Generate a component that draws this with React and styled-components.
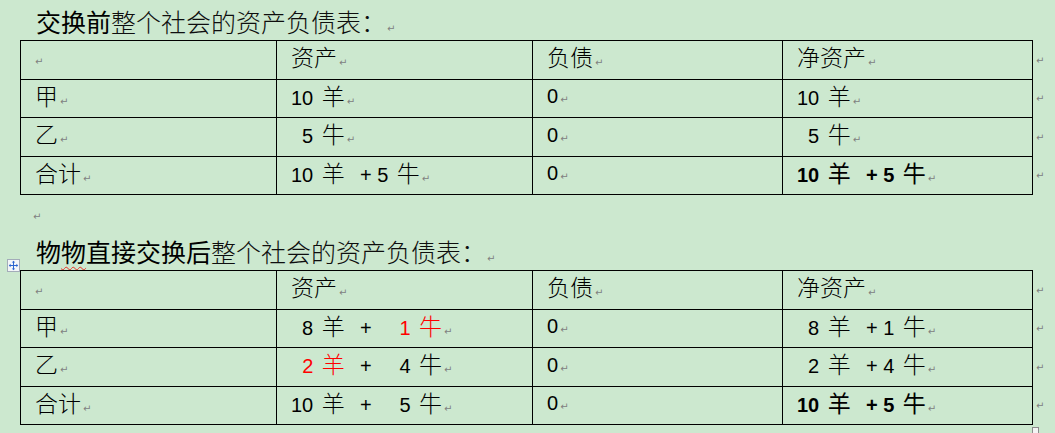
import styled, { createGlobalStyle } from "styled-components";

const LATIN = `"Liberation Sans", "Noto Sans CJK SC", sans-serif`;
const CJK = `"Noto Sans CJK SC", "Noto Sans CJK JP", sans-serif`;
const RED = "#ff0000";

const GlobalStyle = createGlobalStyle`
  html, body {
    margin: 0;
    padding: 0;
    background: #cce8cf;
  }
`;

const Page = styled.div`
  width: 1055px;
  height: 433px;
  overflow: hidden;
  box-sizing: border-box;
  padding-top: 2px;
  background: #cce8cf;
  color: #000;
`;

const Heading = styled.h2`
  margin: 0;
  height: 38px;
  padding-left: 36px;
  line-height: 38px;
  font-family: ${CJK};
  font-size: 25px;
  font-weight: 300;
  color: #0e0e0e;
  white-space: nowrap;
`;

const Strong = styled.span`
  font-weight: 400;
  color: #000;
`;

const Misspelt = styled.span`
  text-decoration: underline wavy #e8322a;
  text-decoration-thickness: 1px;
  text-underline-offset: 4px;
`;

const Mark = styled.span`
  margin-left: ${({ $gap }) => $gap ?? 2}px;
  font-family: "DejaVu Sans", sans-serif;
  font-size: 10px;
  font-weight: 400;
  color: #808080;
`;

const EmptyPara = styled.div`
  height: 37px;
  box-sizing: border-box;
  padding: 0 0 9px 33px;
  display: flex;
  align-items: flex-end;
  line-height: 12px;
`;

const TableWrap = styled.div`
  position: relative;
  margin-left: 20px;
  width: 1035px;
`;

const Table = styled.table`
  border-collapse: collapse;
  table-layout: fixed;
`;

const Row = styled.tr`
  height: 38.5px;
`;

const Cell = styled.td`
  padding: 0 0 0 14px;
  border: 1px solid #000;
  vertical-align: middle;
  font-family: ${LATIN};
  font-size: 20px;
  font-weight: ${({ $bold }) => ($bold ? 700 : 400)};
  white-space: pre;
  line-height: 26px;
`;

const EndCell = styled.td`
  padding: 0 0 0 1px;
  border: none;
  vertical-align: middle;
  line-height: 26px;
`;

const Label = styled.span`
  font-family: ${CJK};
  font-size: 23px;
  font-weight: 300;
  color: #000;
`;

const Amount = styled.span`
  white-space: pre;
`;

const Unit = styled.span`
  margin: 0 4px 0 3px;
  font-family: ${CJK};
  font-size: 23px;
  font-weight: ${({ $bold }) => ($bold ? 400 : 300)};
  color: ${({ $red }) => ($red ? RED : "#000")};

  &:last-child {
    margin-right: 0;
  }
`;

const Num = styled.span`
  color: ${({ $red }) => ($red ? RED : "inherit")};
`;

const MoveHandle = styled.div`
  position: absolute;
  left: -13px;
  top: -12px;
  width: 13px;
  height: 13px;
`;

const ResizeHandle = styled.div`
  position: absolute;
  left: 1012px;
  top: calc(100% + 2px);
  width: 5px;
  height: 5px;
  border: 1px solid #8c8c8c;
  background: #f4f4f4;
`;

const u = (c, red) => ({ u: c, red });
const r = (t) => ({ t, red: true });

const table1 = [
  { label: "甲", assets: ["10 ", u("羊")], net: ["10 ", u("羊")] },
  { label: "乙", assets: ["  5 ", u("牛")], net: ["  5 ", u("牛")] },
  {
    label: "合计",
    assets: ["10 ", u("羊"), "  + 5 ", u("牛")],
    net: ["10 ", u("羊"), "  + 5 ", u("牛")],
    bold: true,
  },
];

const table2 = [
  {
    label: "甲",
    assets: ["  8 ", u("羊"), "  +     ", r("1 "), u("牛", true)],
    net: ["  8 ", u("羊"), "  + 1 ", u("牛")],
  },
  {
    label: "乙",
    assets: ["  ", r("2 "), u("羊", true), "  +     4 ", u("牛")],
    net: ["  2 ", u("羊"), "  + 4 ", u("牛")],
  },
  {
    label: "合计",
    assets: ["10 ", u("羊"), "  +     5 ", u("牛")],
    net: ["10 ", u("羊"), "  + 5 ", u("牛")],
    bold: true,
  },
];

function Qty({ parts, bold }) {
  return (
    <Amount>
      {parts.map((p, i) => {
        if (typeof p === "string") return <span key={i}>{p}</span>;
        if (p.u) return <Unit key={i} $red={p.red} $bold={bold}>{p.u}</Unit>;
        return <Num key={i} $red={p.red}>{p.t}</Num>;
      })}
    </Amount>
  );
}

function Ret() {
  return <Mark>↵</Mark>;
}

function BalanceTable({ rows }) {
  return (
    <Table>
      <colgroup>
        <col style={{ width: 256 }} />
        <col style={{ width: 256 }} />
        <col style={{ width: 250 }} />
        <col style={{ width: 250 }} />
        <col style={{ width: 20 }} />
      </colgroup>
      <tbody>
        <Row>
          <Cell><Mark $gap={0}>↵</Mark></Cell>
          <Cell><Label>资产</Label><Ret /></Cell>
          <Cell><Label>负债</Label><Ret /></Cell>
          <Cell><Label>净资产</Label><Ret /></Cell>
          <EndCell><Ret /></EndCell>
        </Row>
        {rows.map((row) => (
          <Row key={row.label}>
            <Cell><Label>{row.label}</Label><Ret /></Cell>
            <Cell><Qty parts={row.assets} /><Ret /></Cell>
            <Cell>0<Ret /></Cell>
            <Cell $bold={row.bold}><Qty parts={row.net} bold={row.bold} /><Ret /></Cell>
            <EndCell><Ret /></EndCell>
          </Row>
        ))}
      </tbody>
    </Table>
  );
}

export default function App() {
  return (
    <Page>
      <GlobalStyle />
      <Heading>
        <Strong>交换前</Strong>整个社会的资产负债表：<Mark $gap={1}>↵</Mark>
      </Heading>
      <TableWrap>
        <BalanceTable rows={table1} />
      </TableWrap>
      <EmptyPara>
        <Mark $gap={0}>↵</Mark>
      </EmptyPara>
      <Heading>
        <Strong>
          物<Misspelt>物</Misspelt>直接交换后
        </Strong>
        整个社会的资产负债表：<Mark $gap={1}>↵</Mark>
      </Heading>
      <TableWrap>
        <MoveHandle>
          <svg width="13" height="13" viewBox="0 0 13 13">
            <rect x="0.5" y="0.5" width="12" height="12" fill="#f3f5f8" stroke="#a3acb9" />
            <path d="M6.5 3v7M3 6.5h7" stroke="#2b64cf" strokeWidth="1" />
            <path d="M6.5 1.8L4.8 3.6h3.4zM6.5 11.2L4.8 9.4h3.4zM1.8 6.5L3.6 4.8v3.4zM11.2 6.5L9.4 4.8v3.4z" fill="#2b64cf" />
          </svg>
        </MoveHandle>
        <BalanceTable rows={table2} />
        <ResizeHandle />
      </TableWrap>
    </Page>
  );
}
